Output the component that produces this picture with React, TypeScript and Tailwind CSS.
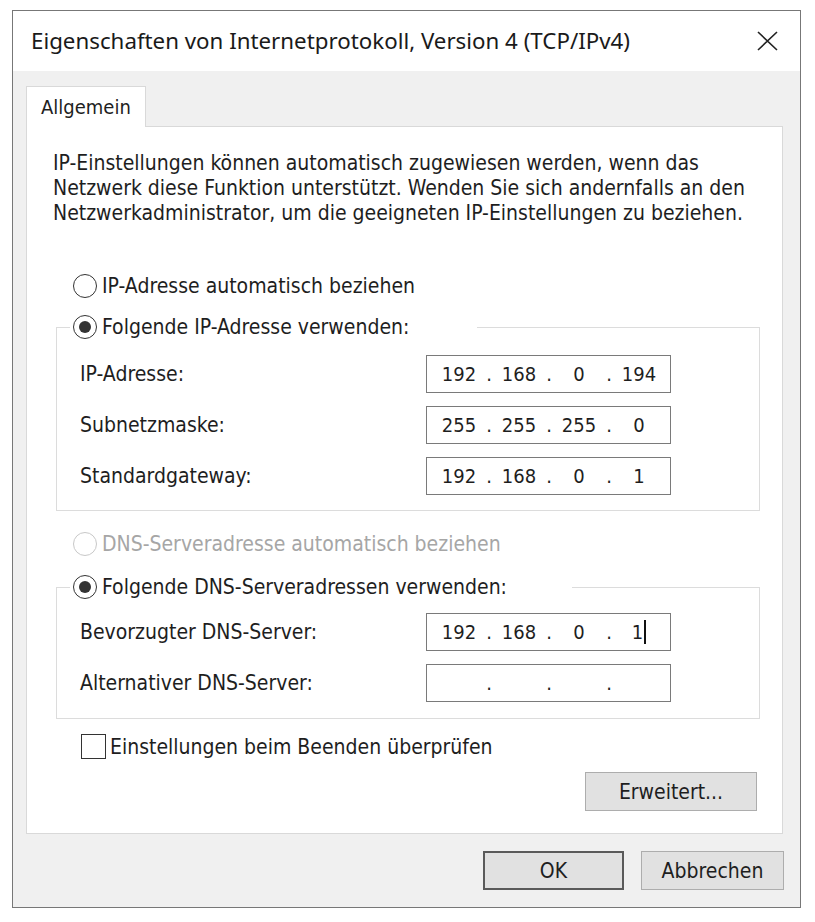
function Radio({ checked = false, disabled = false }: { checked?: boolean; disabled?: boolean }) {
  return (
    <span
      className={`flex h-[24px] w-[24px] shrink-0 items-center justify-center rounded-full border-[1.5px] bg-white ${
        disabled ? "border-[#c8c8c8]" : "border-[#333333]"
      }`}
    >
      {checked && <span className="h-[12px] w-[12px] rounded-full bg-[#333333]" />}
    </span>
  );
}

function IpField({ parts, caret = false }: { parts: string[]; caret?: boolean }) {
  return (
    <div className="flex h-[38px] w-[245px] items-center border border-[#7a7a7a] bg-white pl-[10px] text-[20px] text-[#1e1e1e]">
      {parts.map((p, i) => (
        <div key={i} className="flex items-center">
          {i > 0 && <span className="w-[16px] text-center">.</span>}
          <span className="flex w-[44px] items-center justify-center">
            {p}
            {caret && i === 3 && <span className="ml-[1px] inline-block h-[24px] w-[2px] bg-[#111]" />}
          </span>
        </div>
      ))}
    </div>
  );
}

function Row({ label, parts, caret }: { label: string; parts: string[]; caret?: boolean }) {
  return (
    <div className="flex items-center pl-[23px]">
      <span className="w-[346px]">{label}</span>
      <IpField parts={parts} caret={caret} />
    </div>
  );
}

export default function App() {
  return (
    <div className="h-[922px] w-[815px] bg-white pl-[12px] pt-[10px] font-['DejaVu_Sans',sans-serif] text-[21px] leading-[24px] text-[#1e1e1e] [font-stretch:condensed]">
      <div className="flex h-[898px] w-[789px] flex-col border-[1.5px] border-[#777777]">
        {/* title bar */}
        <div className="flex h-[60px] items-center justify-between bg-white pl-[18px] pr-[22px]">
          <span className="font-['Noto_Sans',sans-serif] text-[22.3px] text-[#1a1a1a] [font-stretch:normal]">
            Eigenschaften von Internetprotokoll, Version 4 (TCP/IPv4)
          </span>
          <svg width="21" height="20" viewBox="0 0 21 20" className="text-[#222]">
            <path d="M1 1 L20 19 M20 1 L1 19" stroke="currentColor" strokeWidth="1.6" fill="none" />
          </svg>
        </div>

        <div className="flex flex-1 flex-col bg-[#f0f0f0] px-[13px] pt-[15px]">
          {/* tab */}
          <div className="relative z-10 -mb-px flex h-[41px] w-[120px] items-center border border-b-0 border-[#d9d9d9] bg-white pl-[14px] text-[20px]">
            Allgemein
          </div>

          {/* panel */}
          <div className="flex h-[708px] w-[757px] flex-col border border-[#d9d9d9] bg-white">
            <p className="ml-[26px] mt-[24px] whitespace-nowrap leading-[25px]">
              IP-Einstellungen können automatisch zugewiesen werden, wenn das
              <br />
              Netzwerk diese Funktion unterstützt. Wenden Sie sich andernfalls an den
              <br />
              Netzwerkadministrator, um die geeigneten IP-Einstellungen zu beziehen.
            </p>

            <div className="ml-[46px] mt-[48px] flex items-center gap-[5px]">
              <Radio />
              <span>IP-Adresse automatisch beziehen</span>
            </div>

            <fieldset className="ml-[29px] mt-[17px] w-[704px] border border-[#dcdcdc] p-0 pb-[15px]">
              <legend className="ml-[13px] flex w-[407px] items-center gap-[5px] pl-[3px]">
                <Radio checked />
                <span>Folgende IP-Adresse verwenden:</span>
              </legend>
              <div className="mt-[16px] flex flex-col gap-[13px]">
                <Row label="IP-Adresse:" parts={["192", "168", "0", "194"]} />
                <Row label="Subnetzmaske:" parts={["255", "255", "255", "0"]} />
                <Row label="Standardgateway:" parts={["192", "168", "0", "1"]} />
              </div>
            </fieldset>

            <div className="ml-[46px] mt-[21px] flex items-center gap-[5px] text-[#a6a6a6]">
              <Radio disabled />
              <span>DNS-Serveradresse automatisch beziehen</span>
            </div>

            <fieldset className="ml-[29px] mt-[19px] w-[704px] border border-[#dcdcdc] p-0 pb-[16px]">
              <legend className="ml-[13px] flex w-[502px] items-center gap-[5px] pl-[3px]">
                <Radio checked />
                <span>Folgende DNS-Serveradressen verwenden:</span>
              </legend>
              <div className="mt-[14px] flex flex-col gap-[13px]">
                <Row label="Bevorzugter DNS-Server:" parts={["192", "168", "0", "1"]} caret />
                <Row label="Alternativer DNS-Server:" parts={["", "", "", ""]} />
              </div>
            </fieldset>

            <div className="ml-[54px] mt-[15px] flex items-center gap-[4px]">
              <span className="h-[25px] w-[25px] border-[1.5px] border-[#333333] bg-white" />
              <span>Einstellungen beim Beenden überprüfen</span>
            </div>

            <div className="mr-[25px] mt-[13px] flex justify-end">
              <button className="h-[39px] w-[172px] border border-[#adadad] bg-[#e1e1e1] text-[21px]">
                Erweitert...
              </button>
            </div>
          </div>

          {/* footer buttons */}
          <div className="mt-[17px] flex justify-end gap-[17px] pr-[3px]">
            <button className="h-[39px] w-[141px] border-2 border-[#5a5a5a] bg-[#e1e1e1] text-[21px]">OK</button>
            <button className="h-[39px] w-[143px] border border-[#adadad] bg-[#e1e1e1] text-[21px]">Abbrechen</button>
          </div>
        </div>
      </div>
    </div>
  );
}
